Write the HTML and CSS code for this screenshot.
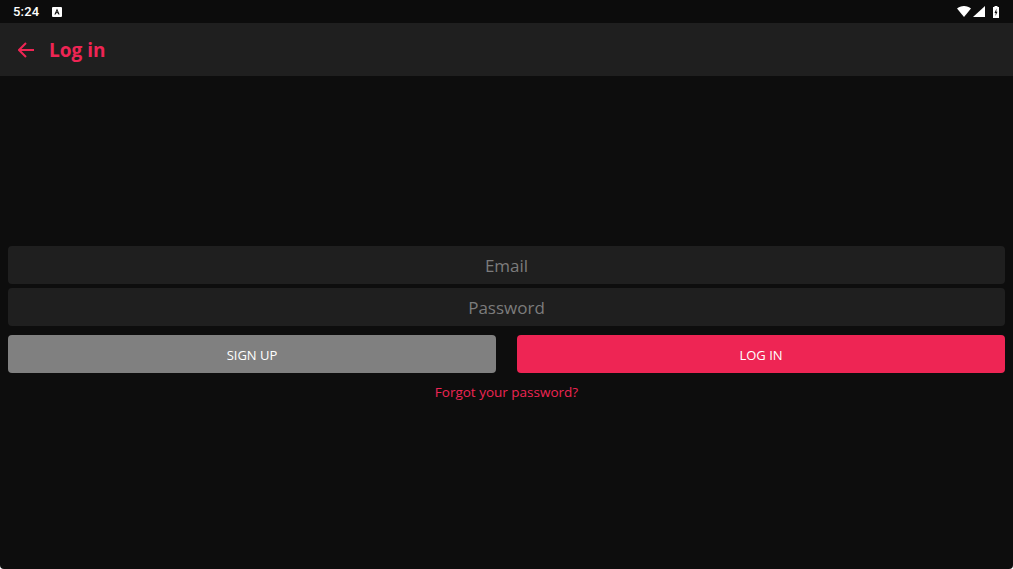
FILE: index.html
```html
<!DOCTYPE html>
<html lang="en">
<head>
<meta charset="utf-8">
<title>Log in</title>
<link rel="stylesheet" href="styles.css">
</head>
<body>
<div class="screen">
  <div class="status">
    <div class="status-left">
      <span class="time">5:24</span>
      <svg class="notif" width="10" height="10" viewBox="0 0 10 10"><rect width="10" height="10" rx="1" fill="#fff"/><path d="M5 1.6 2.4 7.4h1.2l.5-1.2h1.8l.5 1.2h1.2zM4.5 5.2 5 3.8l.5 1.4z" fill="#0c0c0c"/></svg>
    </div>
    <div class="status-right">
      <svg class="wifi" width="14" height="11" viewBox="0 0 14 11"><path d="M0 2.6C1.8 1 4.2 0 7 0s5.2 1 7 2.6L7 11z" fill="#fff"/></svg>
      <svg class="cell" width="12" height="11" viewBox="0 0 12 11"><path d="M12 0v11H0z" fill="#fff"/></svg>
      <svg class="battery" width="6" height="12" viewBox="0 0 6 12"><path d="M1.5 0h3v1H6v11H0V1h1.500z" fill="#fff"/><path d="M3.500 2.500 1.500 7h1.200L2.500 10l2-4.200H3.300z" fill="#0c0c0c"/></svg>
    </div>
  </div>
  <header class="appbar">
    <svg class="back" width="16" height="16" viewBox="0 0 16 16"><path d="M16 8H1.500M8 1 1 8l7 7" fill="none" stroke="#ee2554" stroke-width="2"/></svg>
    <h1 class="title">Log in</h1>
  </header>
  <main class="content">
    <form class="form">
      <input class="field" type="text" placeholder="Email">
      <input class="field" type="password" placeholder="Password">
      <div class="actions">
        <button class="btn btn-muted" type="button">SIGN UP</button>
        <button class="btn btn-primary" type="button">LOG IN</button>
      </div>
      <a class="forgot" href="#">Forgot your password?</a>
    </form>
  </main>
</div>
</body>
</html>
```
FILE: styles.css
```css
* { box-sizing: border-box; }
html, body { margin: 0; height: 100%; background: #fff; }
body { font-family: "Open Sans", "Noto Sans", sans-serif; }
.screen {
  width: 1013px;
  height: 569px;
  background: #0d0d0d;
  border-radius: 0 0 4px 4px;
  display: flex;
  flex-direction: column;
  overflow: hidden;
}
.status {
  height: 23px;
  flex: none;
  background: #0c0c0c;
  display: flex;
  align-items: center;
  justify-content: space-between;
  padding: 0 14px 0 13px;
  color: #fff;
}
.status-left { display: flex; align-items: center; gap: 13px; }
.time { font-family: Roboto, sans-serif; font-size: 13px; font-weight: 500; letter-spacing: .2px; }
.status-right { display: flex; align-items: center; }
.status-right svg { display: block; }
.cell { margin-left: 2px; margin-right: 8px; }
.notif { display: block; }
.appbar {
  height: 53px;
  flex: none;
  background: #1f1f1f;
  display: flex;
  align-items: center;
  gap: 15px;
  padding: 0 18px;
}
.title { margin: 0; padding-top: 2px; color: #ee2554; font-size: 19px; font-weight: 700; line-height: 1; }
.back { display: block; }
.content {
  flex: 1;
  display: flex;
  flex-direction: column;
  padding: 170px 8px 0;
}
.form { display: flex; flex-direction: column; }
.field {
  height: 38px;
  width: 100%;
  border: 0;
  outline: 0;
  border-radius: 4px;
  background: #1f1f1f;
  color: #fff;
  font: 400 17px "Open Sans", sans-serif;
  text-align: center;
  padding: 0;
  margin-bottom: 4px;
}
.field::placeholder { color: #7c7c7c; opacity: 1; }
.actions { display: flex; gap: 21px; margin-top: 5px; }
.btn {
  flex: 1;
  height: 38px;
  border: 0;
  border-radius: 4px;
  color: #fff;
  font: 400 13px "Open Sans", sans-serif;
  padding: 2px 0 0;
}
.btn-muted { background: #808080; }
.btn-primary { background: #ee2554; }
.forgot {
  margin-top: 10px;
  text-align: center;
  color: #ee2554;
  font-size: 13.500px;
  line-height: 18px;
  text-decoration: none;
}
```
